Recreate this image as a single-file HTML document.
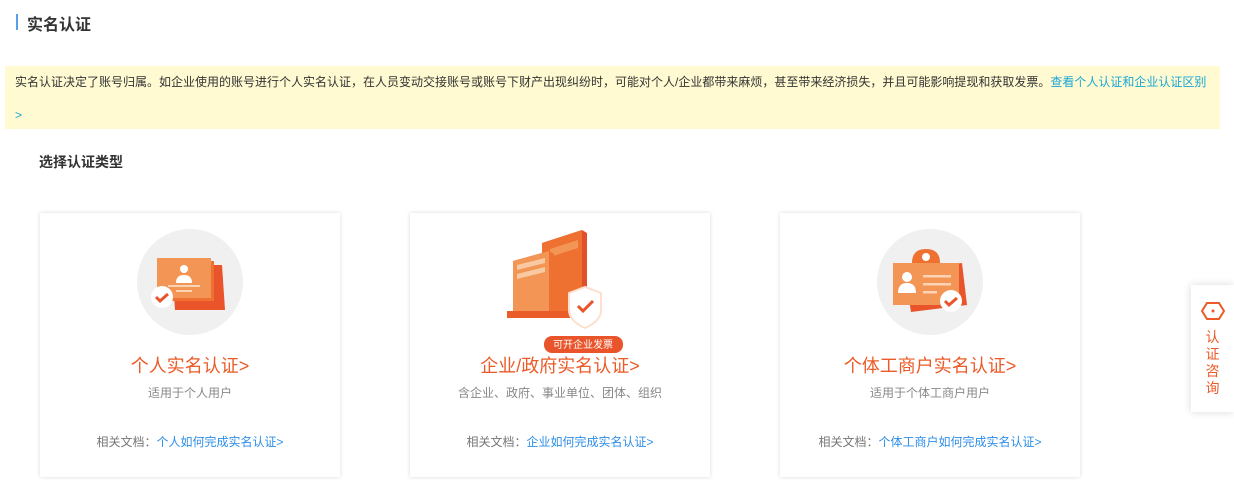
<!DOCTYPE html>
<html><head><meta charset="utf-8"><style>
*{margin:0;padding:0;box-sizing:border-box}
body{width:1234px;height:495px;background:#fff;font-family:"Liberation Sans","Noto Sans CJK SC",sans-serif;position:relative;overflow:hidden;color:#333}
.t{position:absolute;left:27px;top:11px;font-size:16px;font-weight:bold;color:#333}
.bar{position:absolute;left:16px;top:14px;width:2px;height:16px;background:#5aa0e6}
.ban{position:absolute;left:5px;top:66px;width:1215px;height:63px;background:#fffad1;font-size:12px;color:#333;padding:0 10px;line-height:33px}
.ban a{color:#19a7d6;text-decoration:none}
.sel{position:absolute;left:39px;top:152px;font-size:14px;font-weight:bold;color:#333}
.card{position:absolute;top:213px;width:300px;height:264px;background:#fff;box-shadow:0 0 4px rgba(0,0,0,.15);text-align:center}
.circ{position:absolute;left:97px;top:16px;width:106px;height:106px;border-radius:50%;background:#f0f0f0}
.ct{position:absolute;left:0;width:100%;top:139px;font-size:18px;color:#ec5a27}
.cs{position:absolute;left:0;width:100%;top:171px;font-size:12px;color:#888}
.cd{position:absolute;left:0;width:100%;top:220px;font-size:12px;color:#777}
.cd span{color:#2e8ee8}
.side{position:absolute;left:1191px;top:285px;width:43px;height:127px;background:#fff;box-shadow:0 0 8px rgba(0,0,0,.15);text-align:center;color:#ec5a27;font-size:14px;line-height:17px}
</style></head><body>
<div class="bar"></div><div class="t">实名认证</div>
<div class="ban">实名认证决定了账号归属。如企业使用的账号进行个人实名认证，在人员变动交接账号或账号下财产出现纠纷时，可能对个人/企业都带来麻烦，甚至带来经济损失，并且可能影响提现和获取发票。<a>查看个人认证和企业认证区别</a><br><a>&gt;</a></div>
<div class="sel">选择认证类型</div>

<div class="card" style="left:40px">
<div class="circ"></div>
<svg style="position:absolute;left:0;top:0" width="300" height="120">
<path d="M132 52h50l3 45h-50z" fill="#e9542a"/>
<path d="M124 48h50v40h-50z" fill="#ee7131"/>
<rect x="117" y="45" width="54" height="40" fill="#f29555"/>
<circle cx="144" cy="56" r="4" fill="#fff"/><path d="M136 70q0-8 8-8t8 8z" fill="#fff"/>
<rect x="128" y="72" width="32" height="2" fill="#fbd4b5"/><rect x="136" y="77" width="16" height="2" fill="#fbd4b5"/>
<circle cx="122" cy="84" r="11" fill="#fff"/><path d="M116 84l4 4 8-7" stroke="#e9542a" stroke-width="3" fill="none"/>
</svg>
<div class="ct">个人实名认证&gt;</div><div class="cs">适用于个人用户</div>
<div class="cd">相关文档：<span>个人如何完成实名认证&gt;</span></div></div>

<div class="card" style="left:410px">
<svg style="position:absolute;left:0;top:0" width="300" height="140">
<path d="M132 30l40-13 5 3v81h-45z" fill="#e2502a"/>
<path d="M132 30l40-13v84h-40z" fill="#ee7131"/>
<path d="M140 36l28-9v8l-28 9z" fill="#f29555"/>
<path d="M103 48l36-10 5 3v60h-41z" fill="#ee7131"/>
<path d="M103 48l36-10v63h-36z" fill="#f29555"/>
<path d="M107 52l28-7v5l-28 7z" fill="#f9c9a2"/>
<path d="M107 61l28-7v5l-28 7z" fill="#f9c9a2"/>
<rect x="97" y="98" width="82" height="7" fill="#ea5c28"/>
<path d="M159 80l16-6 16 6v17q0 11-16 18-16-7-16-18z" fill="#fff" stroke="#fde0cf" stroke-width="2"/>
<path d="M168 93l5 5 10-10" stroke="#e9542a" stroke-width="3" fill="none"/>
<rect x="134" y="123" width="79" height="17" rx="8" fill="#e9542a"/>
<text x="173" y="135" font-size="10" fill="#fff" text-anchor="middle" font-family="Liberation Sans,Noto Sans CJK SC,sans-serif">可开企业发票</text>
</svg>
<div class="ct">企业/政府实名认证&gt;</div><div class="cs">含企业、政府、事业单位、团体、组织</div>
<div class="cd">相关文档：<span>企业如何完成实名认证&gt;</span></div></div>

<div class="card" style="left:780px">
<div class="circ"></div>
<svg style="position:absolute;left:0;top:0" width="300" height="120">
<path d="M124 56l58-6 5 42-56 7z" fill="#e9542a"/>
<rect x="113" y="50" width="66" height="42" fill="#f29555"/>
<path d="M132 50q0-14 14-14t14 14z" fill="#ee7131"/><circle cx="146" cy="44" r="4" fill="#fff"/>
<circle cx="127" cy="64" r="5" fill="#fff"/><path d="M118 80q0-10 9-10t9 10z" fill="#fff"/>
<rect x="143" y="62" width="28" height="2.5" fill="#fbd4b5"/><rect x="143" y="70" width="28" height="2.5" fill="#fbd4b5"/><rect x="143" y="78" width="14" height="2.5" fill="#fbd4b5"/>
<circle cx="171" cy="88" r="11" fill="#fff"/><path d="M165 88l4 4 8-7" stroke="#e9542a" stroke-width="3" fill="none"/>
</svg>
<div class="ct">个体工商户实名认证&gt;</div><div class="cs">适用于个体工商户用户</div>
<div class="cd">相关文档：<span>个体工商户如何完成实名认证&gt;</span></div></div>

<div class="side">
<svg style="display:block;margin:16px auto 8px" width="26" height="20"><path d="M7 2h12l5 8-5 8H7l-5-8z" fill="none" stroke="#ec5a27" stroke-width="2"/><circle cx="13" cy="10" r="1.5" fill="#ec5a27"/></svg>
认<br>证<br>咨<br>询</div>
</body></html>
